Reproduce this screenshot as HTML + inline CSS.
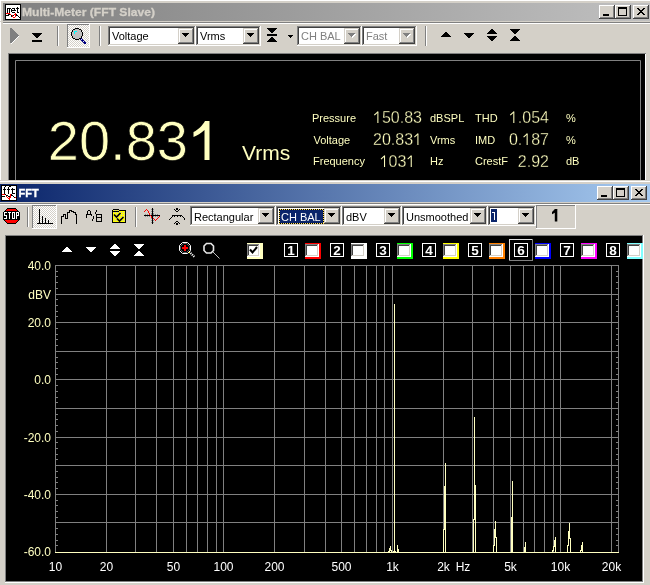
<!DOCTYPE html>
<html><head><meta charset="utf-8"><style>
html,body{margin:0;padding:0;background:#d4d0c8;overflow:hidden;}
svg{display:block;font-family:"Liberation Sans",sans-serif;will-change:transform;}
</style></head><body>
<svg width="650" height="585" viewBox="0 0 650 585">
<rect x="0" y="0" width="650" height="585" fill="#d4d0c8"/>
<rect x="0" y="0" width="650" height="1" fill="#ffffff"/>
<rect x="0" y="0" width="1" height="180" fill="#ffffff"/>
<defs><linearGradient id="g1" x1="0" x2="1" y1="0" y2="0"><stop offset="0" stop-color="#808080"/><stop offset="1" stop-color="#c0c0c0"/></linearGradient></defs>
<rect x="3" y="3" width="647" height="18" fill="url(#g1)"/>
<rect x="5" y="4" width="16" height="1" fill="#000"/>
<rect x="5" y="5" width="1" height="1" fill="#000"/>
<rect x="6" y="5" width="14" height="1" fill="#fff"/>
<rect x="20" y="5" width="1" height="1" fill="#000"/>
<rect x="5" y="6" width="1" height="1" fill="#000"/>
<rect x="6" y="6" width="14" height="1" fill="#fff"/>
<rect x="20" y="6" width="1" height="1" fill="#000"/>
<rect x="5" y="7" width="1" height="1" fill="#000"/>
<rect x="6" y="7" width="11" height="1" fill="#fff"/>
<rect x="17" y="7" width="1" height="1" fill="#000"/>
<rect x="18" y="7" width="2" height="1" fill="#fff"/>
<rect x="20" y="7" width="1" height="1" fill="#000"/>
<rect x="5" y="8" width="1" height="1" fill="#000"/>
<rect x="6" y="8" width="1" height="1" fill="#fff"/>
<rect x="7" y="8" width="4" height="1" fill="#000"/>
<rect x="11" y="8" width="1" height="1" fill="#fff"/>
<rect x="12" y="8" width="3" height="1" fill="#000"/>
<rect x="15" y="8" width="1" height="1" fill="#fff"/>
<rect x="16" y="8" width="3" height="1" fill="#000"/>
<rect x="19" y="8" width="1" height="1" fill="#fff"/>
<rect x="20" y="8" width="1" height="1" fill="#000"/>
<rect x="5" y="9" width="1" height="1" fill="#000"/>
<rect x="6" y="9" width="1" height="1" fill="#fff"/>
<rect x="7" y="9" width="1" height="1" fill="#000"/>
<rect x="8" y="9" width="1" height="1" fill="#fff"/>
<rect x="9" y="9" width="1" height="1" fill="#000"/>
<rect x="10" y="9" width="1" height="1" fill="#fff"/>
<rect x="11" y="9" width="1" height="1" fill="#000"/>
<rect x="12" y="9" width="2" height="1" fill="#fff"/>
<rect x="14" y="9" width="1" height="1" fill="#000"/>
<rect x="15" y="9" width="2" height="1" fill="#fff"/>
<rect x="17" y="9" width="1" height="1" fill="#000"/>
<rect x="18" y="9" width="2" height="1" fill="#fff"/>
<rect x="20" y="9" width="1" height="1" fill="#000"/>
<rect x="5" y="10" width="1" height="1" fill="#000"/>
<rect x="6" y="10" width="1" height="1" fill="#fff"/>
<rect x="7" y="10" width="1" height="1" fill="#000"/>
<rect x="8" y="10" width="1" height="1" fill="#fff"/>
<rect x="9" y="10" width="1" height="1" fill="#000"/>
<rect x="10" y="10" width="1" height="1" fill="#fff"/>
<rect x="11" y="10" width="5" height="1" fill="#000"/>
<rect x="16" y="10" width="1" height="1" fill="#fff"/>
<rect x="17" y="10" width="1" height="1" fill="#000"/>
<rect x="18" y="10" width="2" height="1" fill="#fff"/>
<rect x="20" y="10" width="1" height="1" fill="#000"/>
<rect x="5" y="11" width="1" height="1" fill="#000"/>
<rect x="6" y="11" width="1" height="1" fill="#fff"/>
<rect x="7" y="11" width="1" height="1" fill="#000"/>
<rect x="8" y="11" width="1" height="1" fill="#fff"/>
<rect x="9" y="11" width="1" height="1" fill="#000"/>
<rect x="10" y="11" width="1" height="1" fill="#fff"/>
<rect x="11" y="11" width="1" height="1" fill="#000"/>
<rect x="12" y="11" width="5" height="1" fill="#fff"/>
<rect x="17" y="11" width="1" height="1" fill="#000"/>
<rect x="18" y="11" width="2" height="1" fill="#fff"/>
<rect x="20" y="11" width="1" height="1" fill="#000"/>
<rect x="5" y="12" width="1" height="1" fill="#000"/>
<rect x="6" y="12" width="1" height="1" fill="#fff"/>
<rect x="7" y="12" width="1" height="1" fill="#000"/>
<rect x="8" y="12" width="1" height="1" fill="#fff"/>
<rect x="9" y="12" width="1" height="1" fill="#000"/>
<rect x="10" y="12" width="2" height="1" fill="#fff"/>
<rect x="12" y="12" width="3" height="1" fill="#000"/>
<rect x="15" y="12" width="2" height="1" fill="#fff"/>
<rect x="17" y="12" width="2" height="1" fill="#000"/>
<rect x="19" y="12" width="1" height="1" fill="#fff"/>
<rect x="20" y="12" width="1" height="1" fill="#000"/>
<rect x="5" y="13" width="1" height="1" fill="#000"/>
<rect x="6" y="13" width="4" height="1" fill="#f00"/>
<rect x="10" y="13" width="5" height="1" fill="#fff"/>
<rect x="15" y="13" width="1" height="1" fill="#f00"/>
<rect x="16" y="13" width="4" height="1" fill="#fff"/>
<rect x="20" y="13" width="1" height="1" fill="#000"/>
<rect x="5" y="14" width="1" height="1" fill="#000"/>
<rect x="6" y="14" width="2" height="1" fill="#fff"/>
<rect x="8" y="14" width="2" height="1" fill="#000"/>
<rect x="10" y="14" width="1" height="1" fill="#f00"/>
<rect x="11" y="14" width="3" height="1" fill="#fff"/>
<rect x="14" y="14" width="2" height="1" fill="#f00"/>
<rect x="16" y="14" width="1" height="1" fill="#000"/>
<rect x="17" y="14" width="3" height="1" fill="#fff"/>
<rect x="20" y="14" width="1" height="1" fill="#000"/>
<rect x="5" y="15" width="4" height="1" fill="#000"/>
<rect x="9" y="15" width="2" height="1" fill="#fff"/>
<rect x="11" y="15" width="1" height="1" fill="#000"/>
<rect x="12" y="15" width="1" height="1" fill="#f00"/>
<rect x="13" y="15" width="1" height="1" fill="#000"/>
<rect x="14" y="15" width="1" height="1" fill="#fff"/>
<rect x="15" y="15" width="1" height="1" fill="#f00"/>
<rect x="16" y="15" width="2" height="1" fill="#000"/>
<rect x="18" y="15" width="2" height="1" fill="#fff"/>
<rect x="20" y="15" width="1" height="1" fill="#000"/>
<rect x="5" y="16" width="1" height="1" fill="#000"/>
<rect x="6" y="16" width="5" height="1" fill="#fff"/>
<rect x="11" y="16" width="1" height="1" fill="#000"/>
<rect x="12" y="16" width="1" height="1" fill="#f00"/>
<rect x="13" y="16" width="2" height="1" fill="#fff"/>
<rect x="15" y="16" width="1" height="1" fill="#f00"/>
<rect x="16" y="16" width="2" height="1" fill="#fff"/>
<rect x="18" y="16" width="1" height="1" fill="#000"/>
<rect x="19" y="16" width="1" height="1" fill="#fff"/>
<rect x="20" y="16" width="1" height="1" fill="#000"/>
<rect x="5" y="17" width="1" height="1" fill="#000"/>
<rect x="6" y="17" width="7" height="1" fill="#fff"/>
<rect x="13" y="17" width="2" height="1" fill="#f00"/>
<rect x="15" y="17" width="4" height="1" fill="#fff"/>
<rect x="19" y="17" width="2" height="1" fill="#000"/>
<rect x="5" y="18" width="1" height="1" fill="#000"/>
<rect x="6" y="18" width="14" height="1" fill="#fff"/>
<rect x="20" y="18" width="1" height="1" fill="#000"/>
<rect x="5" y="19" width="16" height="1" fill="#000"/>
<text x="22" y="16" font-size="11" fill="#d4d0c8" font-weight="bold" text-anchor="start" font-family="Liberation Sans" textLength="133" lengthAdjust="spacingAndGlyphs" stroke="#d4d0c8" stroke-width="0.3">Multi-Meter (FFT Slave)</text>
<rect x="599" y="5" width="16" height="14" fill="#404040"/>
<rect x="599" y="5" width="15" height="13" fill="#ffffff"/>
<rect x="600" y="6" width="14" height="12" fill="#808080"/>
<rect x="600" y="6" width="13" height="11" fill="#d4d0c8"/>
<rect x="615" y="5" width="16" height="14" fill="#404040"/>
<rect x="615" y="5" width="15" height="13" fill="#ffffff"/>
<rect x="616" y="6" width="14" height="12" fill="#808080"/>
<rect x="616" y="6" width="13" height="11" fill="#d4d0c8"/>
<rect x="633" y="5" width="16" height="14" fill="#404040"/>
<rect x="633" y="5" width="15" height="13" fill="#ffffff"/>
<rect x="634" y="6" width="14" height="12" fill="#808080"/>
<rect x="634" y="6" width="13" height="11" fill="#d4d0c8"/>
<rect x="603" y="14" width="6" height="2" fill="#000"/>
<rect x="618" y="7" width="9" height="9" fill="#000"/>
<rect x="619" y="9" width="7" height="6" fill="#d4d0c8"/>
<rect x="637" y="8" width="2" height="1" fill="#000"/>
<rect x="643" y="8" width="2" height="1" fill="#000"/>
<rect x="638" y="9" width="2" height="1" fill="#000"/>
<rect x="642" y="9" width="2" height="1" fill="#000"/>
<rect x="639" y="10" width="4" height="1" fill="#000"/>
<rect x="640" y="11" width="2" height="1" fill="#000"/>
<rect x="639" y="12" width="4" height="1" fill="#000"/>
<rect x="638" y="13" width="2" height="1" fill="#000"/>
<rect x="642" y="13" width="2" height="1" fill="#000"/>
<rect x="637" y="14" width="2" height="1" fill="#000"/>
<rect x="643" y="14" width="2" height="1" fill="#000"/>
<rect x="3" y="22" width="647" height="1" fill="#808080"/>
<rect x="3" y="23" width="647" height="1" fill="#ffffff"/>
<rect x="0" y="21" width="650" height="1" fill="#d4d0c8"/>
<rect x="10" y="28" width="2" height="1" fill="#808080"/>
<rect x="10" y="29" width="3" height="1" fill="#808080"/>
<rect x="10" y="30" width="4" height="1" fill="#808080"/>
<rect x="10" y="31" width="5" height="1" fill="#808080"/>
<rect x="10" y="32" width="6" height="1" fill="#808080"/>
<rect x="10" y="33" width="7" height="1" fill="#808080"/>
<rect x="10" y="34" width="8" height="1" fill="#808080"/>
<rect x="10" y="35" width="9" height="1" fill="#808080"/>
<rect x="10" y="36" width="8" height="1" fill="#808080"/>
<rect x="18" y="36" width="1" height="1" fill="#fff"/>
<rect x="10" y="37" width="7" height="1" fill="#808080"/>
<rect x="17" y="37" width="1" height="1" fill="#fff"/>
<rect x="10" y="38" width="6" height="1" fill="#808080"/>
<rect x="16" y="38" width="1" height="1" fill="#fff"/>
<rect x="10" y="39" width="5" height="1" fill="#808080"/>
<rect x="15" y="39" width="1" height="1" fill="#fff"/>
<rect x="10" y="40" width="4" height="1" fill="#808080"/>
<rect x="14" y="40" width="1" height="1" fill="#fff"/>
<rect x="10" y="41" width="3" height="1" fill="#808080"/>
<rect x="13" y="41" width="1" height="1" fill="#fff"/>
<rect x="10" y="42" width="2" height="1" fill="#808080"/>
<rect x="12" y="42" width="1" height="1" fill="#fff"/>
<rect x="11" y="43" width="1" height="1" fill="#fff"/>
<rect x="32" y="33" width="10" height="1" fill="#000"/>
<rect x="33" y="34" width="8" height="1" fill="#000"/>
<rect x="34" y="35" width="6" height="1" fill="#000"/>
<rect x="35" y="36" width="4" height="1" fill="#000"/>
<rect x="36" y="37" width="2" height="1" fill="#000"/>
<rect x="32" y="40" width="10" height="2" fill="#000"/>
<rect x="57" y="26" width="1" height="20" fill="#808080"/>
<rect x="58" y="26" width="1" height="20" fill="#ffffff"/>
<rect x="67" y="24" width="23" height="24" fill="#ffffff"/>
<rect x="67" y="24" width="22" height="23" fill="#808080"/>
<rect x="68" y="25" width="21" height="22" fill="url(#dither)"/>
<defs><pattern id="dither" width="2" height="2" patternUnits="userSpaceOnUse"><rect width="2" height="2" fill="#ffffff"/><rect width="1" height="1" fill="#d4d0c8"/><rect x="1" y="1" width="1" height="1" fill="#d4d0c8"/></pattern></defs>
<rect x="75" y="28" width="4" height="1" fill="#000"/>
<rect x="73" y="29" width="2" height="1" fill="#000"/>
<rect x="75" y="29" width="4" height="1" fill="#c0c0c0"/>
<rect x="79" y="29" width="2" height="1" fill="#000"/>
<rect x="72" y="30" width="1" height="1" fill="#000"/>
<rect x="73" y="30" width="8" height="1" fill="#c0c0c0"/>
<rect x="81" y="30" width="1" height="1" fill="#000"/>
<rect x="72" y="31" width="1" height="1" fill="#000"/>
<rect x="73" y="31" width="1" height="1" fill="#c0c0c0"/>
<rect x="74" y="31" width="3" height="1" fill="#00ffff"/>
<rect x="77" y="31" width="4" height="1" fill="#c0c0c0"/>
<rect x="81" y="31" width="1" height="1" fill="#000"/>
<rect x="71" y="32" width="1" height="1" fill="#000"/>
<rect x="72" y="32" width="2" height="1" fill="#c0c0c0"/>
<rect x="74" y="32" width="1" height="1" fill="#00ffff"/>
<rect x="75" y="32" width="7" height="1" fill="#c0c0c0"/>
<rect x="82" y="32" width="1" height="1" fill="#000"/>
<rect x="71" y="33" width="1" height="1" fill="#000"/>
<rect x="72" y="33" width="2" height="1" fill="#c0c0c0"/>
<rect x="74" y="33" width="1" height="1" fill="#00ffff"/>
<rect x="75" y="33" width="7" height="1" fill="#c0c0c0"/>
<rect x="82" y="33" width="1" height="1" fill="#000"/>
<rect x="71" y="34" width="1" height="1" fill="#000"/>
<rect x="72" y="34" width="10" height="1" fill="#c0c0c0"/>
<rect x="82" y="34" width="1" height="1" fill="#000"/>
<rect x="71" y="35" width="1" height="1" fill="#000"/>
<rect x="72" y="35" width="10" height="1" fill="#c0c0c0"/>
<rect x="82" y="35" width="1" height="1" fill="#000"/>
<rect x="72" y="36" width="1" height="1" fill="#000"/>
<rect x="73" y="36" width="8" height="1" fill="#c0c0c0"/>
<rect x="81" y="36" width="1" height="1" fill="#000"/>
<rect x="72" y="37" width="1" height="1" fill="#000"/>
<rect x="73" y="37" width="8" height="1" fill="#c0c0c0"/>
<rect x="81" y="37" width="1" height="1" fill="#000"/>
<rect x="73" y="38" width="2" height="1" fill="#000"/>
<rect x="75" y="38" width="4" height="1" fill="#c0c0c0"/>
<rect x="79" y="38" width="2" height="1" fill="#000"/>
<rect x="81" y="38" width="1" height="1" fill="#000080"/>
<rect x="75" y="39" width="4" height="1" fill="#000"/>
<rect x="80" y="39" width="1" height="1" fill="#000080"/>
<rect x="81" y="39" width="1" height="1" fill="#e0e0ff"/>
<rect x="82" y="39" width="1" height="1" fill="#000080"/>
<rect x="81" y="40" width="3" height="1" fill="#000080"/>
<rect x="82" y="41" width="1" height="1" fill="#000080"/>
<rect x="83" y="41" width="1" height="1" fill="#e0e0ff"/>
<rect x="84" y="41" width="1" height="1" fill="#000080"/>
<rect x="83" y="42" width="3" height="1" fill="#000080"/>
<rect x="84" y="43" width="2" height="1" fill="#000080"/>
<rect x="99" y="26" width="1" height="20" fill="#808080"/>
<rect x="100" y="26" width="1" height="20" fill="#ffffff"/>
<rect x="108" y="26" width="88" height="20" fill="#ffffff"/>
<rect x="108" y="26" width="87" height="19" fill="#808080"/>
<rect x="109" y="27" width="86" height="18" fill="#d4d0c8"/>
<rect x="109" y="27" width="85" height="17" fill="#404040"/>
<rect x="110" y="28" width="84" height="16" fill="#ffffff"/>
<rect x="178" y="28" width="16" height="16" fill="#404040"/>
<rect x="178" y="28" width="15" height="15" fill="#d4d0c8"/>
<rect x="179" y="29" width="14" height="14" fill="#808080"/>
<rect x="179" y="29" width="13" height="13" fill="#ffffff"/>
<rect x="180" y="30" width="12" height="12" fill="#d4d0c8"/>
<rect x="182" y="33" width="7" height="1" fill="#000"/>
<rect x="183" y="34" width="5" height="1" fill="#000"/>
<rect x="184" y="35" width="3" height="1" fill="#000"/>
<rect x="185" y="36" width="1" height="1" fill="#000"/>
<text x="112" y="40" font-size="11" fill="#000" font-weight="normal" text-anchor="start" font-family="Liberation Sans">Voltage</text>
<rect x="196" y="26" width="65" height="20" fill="#ffffff"/>
<rect x="196" y="26" width="64" height="19" fill="#808080"/>
<rect x="197" y="27" width="63" height="18" fill="#d4d0c8"/>
<rect x="197" y="27" width="62" height="17" fill="#404040"/>
<rect x="198" y="28" width="61" height="16" fill="#ffffff"/>
<rect x="243" y="28" width="16" height="16" fill="#404040"/>
<rect x="243" y="28" width="15" height="15" fill="#d4d0c8"/>
<rect x="244" y="29" width="14" height="14" fill="#808080"/>
<rect x="244" y="29" width="13" height="13" fill="#ffffff"/>
<rect x="245" y="30" width="12" height="12" fill="#d4d0c8"/>
<rect x="247" y="33" width="7" height="1" fill="#000"/>
<rect x="248" y="34" width="5" height="1" fill="#000"/>
<rect x="249" y="35" width="3" height="1" fill="#000"/>
<rect x="250" y="36" width="1" height="1" fill="#000"/>
<text x="200" y="40" font-size="11" fill="#000" font-weight="normal" text-anchor="start" font-family="Liberation Sans">Vrms</text>
<rect x="267" y="28" width="10" height="1" fill="#000"/>
<rect x="268" y="29" width="8" height="1" fill="#000"/>
<rect x="269" y="30" width="6" height="1" fill="#000"/>
<rect x="270" y="31" width="4" height="1" fill="#000"/>
<rect x="271" y="32" width="2" height="1" fill="#000"/>
<rect x="267" y="34" width="10" height="2" fill="#000"/>
<rect x="271" y="37" width="2" height="1" fill="#000"/>
<rect x="270" y="38" width="4" height="1" fill="#000"/>
<rect x="269" y="39" width="6" height="1" fill="#000"/>
<rect x="268" y="40" width="8" height="1" fill="#000"/>
<rect x="267" y="41" width="10" height="1" fill="#000"/>
<rect x="288" y="35" width="5" height="1" fill="#000"/>
<rect x="289" y="36" width="3" height="1" fill="#000"/>
<rect x="290" y="37" width="1" height="1" fill="#000"/>
<rect x="297" y="26" width="65" height="20" fill="#ffffff"/>
<rect x="297" y="26" width="64" height="19" fill="#808080"/>
<rect x="298" y="27" width="63" height="18" fill="#d4d0c8"/>
<rect x="298" y="27" width="62" height="17" fill="#404040"/>
<rect x="299" y="28" width="61" height="16" fill="#ffffff"/>
<rect x="344" y="28" width="16" height="16" fill="#404040"/>
<rect x="344" y="28" width="15" height="15" fill="#d4d0c8"/>
<rect x="345" y="29" width="14" height="14" fill="#808080"/>
<rect x="345" y="29" width="13" height="13" fill="#ffffff"/>
<rect x="346" y="30" width="12" height="12" fill="#d4d0c8"/>
<rect x="349" y="34" width="7" height="1" fill="#ffffff"/>
<rect x="350" y="35" width="5" height="1" fill="#ffffff"/>
<rect x="351" y="36" width="3" height="1" fill="#ffffff"/>
<rect x="352" y="37" width="1" height="1" fill="#ffffff"/>
<rect x="348" y="33" width="7" height="1" fill="#808080"/>
<rect x="349" y="34" width="5" height="1" fill="#808080"/>
<rect x="350" y="35" width="3" height="1" fill="#808080"/>
<rect x="351" y="36" width="1" height="1" fill="#808080"/>
<text x="301" y="40" font-size="11" fill="#808080" font-weight="normal" text-anchor="start" font-family="Liberation Sans">CH BAL</text>
<rect x="362" y="26" width="55" height="20" fill="#ffffff"/>
<rect x="362" y="26" width="54" height="19" fill="#808080"/>
<rect x="363" y="27" width="53" height="18" fill="#d4d0c8"/>
<rect x="363" y="27" width="52" height="17" fill="#404040"/>
<rect x="364" y="28" width="51" height="16" fill="#ffffff"/>
<rect x="399" y="28" width="16" height="16" fill="#404040"/>
<rect x="399" y="28" width="15" height="15" fill="#d4d0c8"/>
<rect x="400" y="29" width="14" height="14" fill="#808080"/>
<rect x="400" y="29" width="13" height="13" fill="#ffffff"/>
<rect x="401" y="30" width="12" height="12" fill="#d4d0c8"/>
<rect x="404" y="34" width="7" height="1" fill="#ffffff"/>
<rect x="405" y="35" width="5" height="1" fill="#ffffff"/>
<rect x="406" y="36" width="3" height="1" fill="#ffffff"/>
<rect x="407" y="37" width="1" height="1" fill="#ffffff"/>
<rect x="403" y="33" width="7" height="1" fill="#808080"/>
<rect x="404" y="34" width="5" height="1" fill="#808080"/>
<rect x="405" y="35" width="3" height="1" fill="#808080"/>
<rect x="406" y="36" width="1" height="1" fill="#808080"/>
<text x="366" y="40" font-size="11" fill="#808080" font-weight="normal" text-anchor="start" font-family="Liberation Sans">Fast</text>
<rect x="425" y="26" width="1" height="20" fill="#808080"/>
<rect x="426" y="26" width="1" height="20" fill="#ffffff"/>
<rect x="445" y="32" width="2" height="1" fill="#000"/>
<rect x="444" y="33" width="4" height="1" fill="#000"/>
<rect x="443" y="34" width="6" height="1" fill="#000"/>
<rect x="442" y="35" width="8" height="1" fill="#000"/>
<rect x="441" y="36" width="10" height="1" fill="#000"/>
<rect x="464" y="33" width="10" height="1" fill="#000"/>
<rect x="465" y="34" width="8" height="1" fill="#000"/>
<rect x="466" y="35" width="6" height="1" fill="#000"/>
<rect x="467" y="36" width="4" height="1" fill="#000"/>
<rect x="468" y="37" width="2" height="1" fill="#000"/>
<rect x="491" y="29" width="2" height="1" fill="#000"/>
<rect x="490" y="30" width="4" height="1" fill="#000"/>
<rect x="489" y="31" width="6" height="1" fill="#000"/>
<rect x="488" y="32" width="8" height="1" fill="#000"/>
<rect x="487" y="33" width="10" height="1" fill="#000"/>
<rect x="487" y="36" width="10" height="1" fill="#000"/>
<rect x="488" y="37" width="8" height="1" fill="#000"/>
<rect x="489" y="38" width="6" height="1" fill="#000"/>
<rect x="490" y="39" width="4" height="1" fill="#000"/>
<rect x="491" y="40" width="2" height="1" fill="#000"/>
<rect x="510" y="29" width="10" height="1" fill="#000"/>
<rect x="511" y="30" width="8" height="1" fill="#000"/>
<rect x="512" y="31" width="6" height="1" fill="#000"/>
<rect x="513" y="32" width="4" height="1" fill="#000"/>
<rect x="514" y="33" width="2" height="1" fill="#000"/>
<rect x="514" y="36" width="2" height="1" fill="#000"/>
<rect x="513" y="37" width="4" height="1" fill="#000"/>
<rect x="512" y="38" width="6" height="1" fill="#000"/>
<rect x="511" y="39" width="8" height="1" fill="#000"/>
<rect x="510" y="40" width="10" height="1" fill="#000"/>
<rect x="8" y="53" width="638" height="128" fill="#808080"/>
<rect x="9" y="54" width="637" height="127" fill="#ffffff"/>
<rect x="9" y="54" width="636" height="126" fill="#000"/>
<path d="M15.5 200 L15.5 60.5 L640.5 60.5 L640.5 200" stroke="#808080" stroke-width="1" fill="none"/>
<text x="47.8" y="160.2" font-size="56" fill="#ffffc0" font-weight="normal" text-anchor="start" font-family="Liberation Sans" stroke="#000" stroke-width="0.7">20.83</text>
<path d="M205 121 L209.5 121 L209.5 160 L204.5 160 L204.5 130 C201 133.5 197 135.5 193.5 137 L193.5 132 C198 130 202.5 125.5 205 121 Z" fill="#ffffc0"/>
<text x="242" y="160" font-size="21" fill="#ffffc0" font-weight="normal" text-anchor="start" font-family="Liberation Sans">Vrms</text>
<text x="312" y="122" font-size="11" fill="#ffffc0" font-weight="normal" text-anchor="start" font-family="Liberation Sans">Pressure</text>
<text x="373.03517" y="123" font-size="16" fill="#ffffc0" font-weight="normal" text-anchor="start" font-family="Liberation Sans" stroke="#000" stroke-width="0.3">&#x2007;50.83</text>
<path d="M377.36 111.54 H378.41 V123 H377.36 Z M377.96 111.54 L374.24 115.38" fill="#ffffc0" stroke="#ffffc0" stroke-width="0.0"/>
<path d="M377.86 111.84 L374.32 115.06" stroke="#ffffc0" stroke-width="1.1" fill="none"/>
<text x="430" y="122" font-size="11" fill="#ffffc0" font-weight="normal" text-anchor="start" font-family="Liberation Sans">dBSPL</text>
<text x="475" y="122" font-size="11" fill="#ffffc0" font-weight="normal" text-anchor="start" font-family="Liberation Sans">THD</text>
<text x="508.968772" y="123" font-size="16" fill="#ffffc0" font-weight="normal" text-anchor="start" font-family="Liberation Sans" stroke="#000" stroke-width="0.3">&#x2007;.054</text>
<path d="M513.29 111.54 H514.34 V123 H513.29 Z M513.89 111.54 L510.17 115.38" fill="#ffffc0" stroke="#ffffc0" stroke-width="0.0"/>
<path d="M513.79 111.84 L510.25 115.06" stroke="#ffffc0" stroke-width="1.1" fill="none"/>
<text x="566" y="122" font-size="11" fill="#ffffc0" font-weight="normal" text-anchor="start" font-family="Liberation Sans">%</text>
<text x="313.5" y="144" font-size="11" fill="#ffffc0" font-weight="normal" text-anchor="start" font-family="Liberation Sans">Voltage</text>
<text x="373.03517" y="145" font-size="16" fill="#ffffc0" font-weight="normal" text-anchor="start" font-family="Liberation Sans" stroke="#000" stroke-width="0.3">20.83&#x2007;</text>
<path d="M417.39 133.54 H418.44 V145 H417.39 Z M417.99 133.54 L414.27 137.38" fill="#ffffc0" stroke="#ffffc0" stroke-width="0.0"/>
<path d="M417.89 133.84 L414.35 137.06" stroke="#ffffc0" stroke-width="1.1" fill="none"/>
<text x="430" y="144" font-size="11" fill="#ffffc0" font-weight="normal" text-anchor="start" font-family="Liberation Sans">Vrms</text>
<text x="475" y="144" font-size="11" fill="#ffffc0" font-weight="normal" text-anchor="start" font-family="Liberation Sans">IMD</text>
<text x="508.968772" y="145" font-size="16" fill="#ffffc0" font-weight="normal" text-anchor="start" font-family="Liberation Sans" stroke="#000" stroke-width="0.3">0.&#x2007;87</text>
<path d="M526.62 133.54 H527.67 V145 H526.62 Z M527.22 133.54 L523.50 137.38" fill="#ffffc0" stroke="#ffffc0" stroke-width="0.0"/>
<path d="M527.12 133.84 L523.58 137.06" stroke="#ffffc0" stroke-width="1.1" fill="none"/>
<text x="566" y="144" font-size="11" fill="#ffffc0" font-weight="normal" text-anchor="start" font-family="Liberation Sans">%</text>
<text x="313" y="165" font-size="11" fill="#ffffc0" font-weight="normal" text-anchor="start" font-family="Liberation Sans">Frequency</text>
<text x="379.703136" y="167" font-size="16" fill="#ffffc0" font-weight="normal" text-anchor="start" font-family="Liberation Sans" stroke="#000" stroke-width="0.3">&#x2007;03&#x2007;</text>
<path d="M384.02 155.54 H385.07 V167 H384.02 Z M384.62 155.54 L380.90 159.38" fill="#ffffc0" stroke="#ffffc0" stroke-width="0.0"/>
<path d="M384.52 155.84 L380.98 159.06" stroke="#ffffc0" stroke-width="1.1" fill="none"/>
<path d="M410.72 155.54 H411.77 V167 H410.72 Z M411.32 155.54 L407.60 159.38" fill="#ffffc0" stroke="#ffffc0" stroke-width="0.0"/>
<path d="M411.22 155.84 L407.68 159.06" stroke="#ffffc0" stroke-width="1.1" fill="none"/>
<text x="430" y="165" font-size="11" fill="#ffffc0" font-weight="normal" text-anchor="start" font-family="Liberation Sans">Hz</text>
<text x="475" y="165" font-size="11" fill="#ffffc0" font-weight="normal" text-anchor="start" font-family="Liberation Sans">CrestF</text>
<text x="517.867204" y="167" font-size="16" fill="#ffffc0" font-weight="normal" text-anchor="start" font-family="Liberation Sans" stroke="#000" stroke-width="0.3">2.92</text>
<text x="566" y="165" font-size="11" fill="#ffffc0" font-weight="normal" text-anchor="start" font-family="Liberation Sans">dB</text>
<rect x="0" y="180" width="650" height="1" fill="#d4d0c8"/>
<rect x="0" y="181" width="650" height="1" fill="#ffffff"/>
<rect x="0" y="182" width="650" height="2" fill="#d4d0c8"/>
<defs><linearGradient id="g2" x1="0" x2="1" y1="0" y2="0"><stop offset="0" stop-color="#0a246a"/><stop offset="1" stop-color="#a6caf0"/></linearGradient></defs>
<rect x="0" y="184" width="650" height="18" fill="url(#g2)"/>
<rect x="1" y="185" width="16" height="1" fill="#000"/>
<rect x="1" y="186" width="1" height="1" fill="#000"/>
<rect x="2" y="186" width="3" height="1" fill="#fff"/>
<rect x="5" y="186" width="1" height="1" fill="#000"/>
<rect x="6" y="186" width="3" height="1" fill="#fff"/>
<rect x="9" y="186" width="2" height="1" fill="#000"/>
<rect x="11" y="186" width="5" height="1" fill="#fff"/>
<rect x="16" y="186" width="1" height="1" fill="#000"/>
<rect x="1" y="187" width="1" height="1" fill="#000"/>
<rect x="2" y="187" width="2" height="1" fill="#fff"/>
<rect x="4" y="187" width="1" height="1" fill="#000"/>
<rect x="5" y="187" width="3" height="1" fill="#fff"/>
<rect x="8" y="187" width="1" height="1" fill="#000"/>
<rect x="9" y="187" width="7" height="1" fill="#fff"/>
<rect x="16" y="187" width="1" height="1" fill="#000"/>
<rect x="1" y="188" width="1" height="1" fill="#000"/>
<rect x="2" y="188" width="2" height="1" fill="#fff"/>
<rect x="4" y="188" width="1" height="1" fill="#000"/>
<rect x="5" y="188" width="3" height="1" fill="#fff"/>
<rect x="8" y="188" width="1" height="1" fill="#000"/>
<rect x="9" y="188" width="3" height="1" fill="#fff"/>
<rect x="12" y="188" width="1" height="1" fill="#000"/>
<rect x="13" y="188" width="3" height="1" fill="#fff"/>
<rect x="16" y="188" width="1" height="1" fill="#000"/>
<rect x="1" y="189" width="1" height="1" fill="#000"/>
<rect x="2" y="189" width="1" height="1" fill="#fff"/>
<rect x="3" y="189" width="3" height="1" fill="#000"/>
<rect x="6" y="189" width="1" height="1" fill="#fff"/>
<rect x="7" y="189" width="3" height="1" fill="#000"/>
<rect x="10" y="189" width="1" height="1" fill="#fff"/>
<rect x="11" y="189" width="4" height="1" fill="#000"/>
<rect x="15" y="189" width="1" height="1" fill="#fff"/>
<rect x="16" y="189" width="1" height="1" fill="#000"/>
<rect x="1" y="190" width="1" height="1" fill="#000"/>
<rect x="2" y="190" width="2" height="1" fill="#fff"/>
<rect x="4" y="190" width="1" height="1" fill="#000"/>
<rect x="5" y="190" width="3" height="1" fill="#fff"/>
<rect x="8" y="190" width="1" height="1" fill="#000"/>
<rect x="9" y="190" width="3" height="1" fill="#fff"/>
<rect x="12" y="190" width="1" height="1" fill="#000"/>
<rect x="13" y="190" width="3" height="1" fill="#fff"/>
<rect x="16" y="190" width="1" height="1" fill="#000"/>
<rect x="1" y="191" width="1" height="1" fill="#000"/>
<rect x="2" y="191" width="2" height="1" fill="#fff"/>
<rect x="4" y="191" width="1" height="1" fill="#000"/>
<rect x="5" y="191" width="3" height="1" fill="#fff"/>
<rect x="8" y="191" width="1" height="1" fill="#000"/>
<rect x="9" y="191" width="3" height="1" fill="#fff"/>
<rect x="12" y="191" width="1" height="1" fill="#000"/>
<rect x="13" y="191" width="3" height="1" fill="#fff"/>
<rect x="16" y="191" width="1" height="1" fill="#000"/>
<rect x="1" y="192" width="1" height="1" fill="#000"/>
<rect x="2" y="192" width="2" height="1" fill="#fff"/>
<rect x="4" y="192" width="1" height="1" fill="#000"/>
<rect x="5" y="192" width="3" height="1" fill="#fff"/>
<rect x="8" y="192" width="1" height="1" fill="#000"/>
<rect x="9" y="192" width="3" height="1" fill="#fff"/>
<rect x="12" y="192" width="1" height="1" fill="#000"/>
<rect x="13" y="192" width="3" height="1" fill="#fff"/>
<rect x="16" y="192" width="1" height="1" fill="#000"/>
<rect x="1" y="193" width="1" height="1" fill="#000"/>
<rect x="2" y="193" width="2" height="1" fill="#fff"/>
<rect x="4" y="193" width="1" height="1" fill="#000"/>
<rect x="5" y="193" width="3" height="1" fill="#fff"/>
<rect x="8" y="193" width="1" height="1" fill="#000"/>
<rect x="9" y="193" width="3" height="1" fill="#fff"/>
<rect x="12" y="193" width="3" height="1" fill="#000"/>
<rect x="15" y="193" width="1" height="1" fill="#fff"/>
<rect x="16" y="193" width="1" height="1" fill="#000"/>
<rect x="1" y="194" width="1" height="1" fill="#000"/>
<rect x="2" y="194" width="3" height="1" fill="#f00"/>
<rect x="5" y="194" width="1" height="1" fill="#000"/>
<rect x="6" y="194" width="4" height="1" fill="#fff"/>
<rect x="10" y="194" width="1" height="1" fill="#f00"/>
<rect x="11" y="194" width="1" height="1" fill="#000"/>
<rect x="12" y="194" width="4" height="1" fill="#fff"/>
<rect x="16" y="194" width="1" height="1" fill="#000"/>
<rect x="1" y="195" width="1" height="1" fill="#000"/>
<rect x="2" y="195" width="4" height="1" fill="#fff"/>
<rect x="6" y="195" width="2" height="1" fill="#000"/>
<rect x="8" y="195" width="2" height="1" fill="#fff"/>
<rect x="10" y="195" width="1" height="1" fill="#f00"/>
<rect x="11" y="195" width="2" height="1" fill="#000"/>
<rect x="13" y="195" width="3" height="1" fill="#fff"/>
<rect x="16" y="195" width="1" height="1" fill="#000"/>
<rect x="1" y="196" width="4" height="1" fill="#000"/>
<rect x="5" y="196" width="1" height="1" fill="#fff"/>
<rect x="6" y="196" width="1" height="1" fill="#f00"/>
<rect x="7" y="196" width="1" height="1" fill="#fff"/>
<rect x="8" y="196" width="2" height="1" fill="#000"/>
<rect x="10" y="196" width="1" height="1" fill="#f00"/>
<rect x="11" y="196" width="2" height="1" fill="#fff"/>
<rect x="13" y="196" width="1" height="1" fill="#000"/>
<rect x="14" y="196" width="2" height="1" fill="#fff"/>
<rect x="16" y="196" width="1" height="1" fill="#000"/>
<rect x="1" y="197" width="1" height="1" fill="#000"/>
<rect x="2" y="197" width="5" height="1" fill="#fff"/>
<rect x="7" y="197" width="1" height="1" fill="#f00"/>
<rect x="8" y="197" width="1" height="1" fill="#fff"/>
<rect x="9" y="197" width="2" height="1" fill="#f00"/>
<rect x="11" y="197" width="3" height="1" fill="#fff"/>
<rect x="14" y="197" width="1" height="1" fill="#000"/>
<rect x="15" y="197" width="1" height="1" fill="#f00"/>
<rect x="16" y="197" width="1" height="1" fill="#000"/>
<rect x="1" y="198" width="1" height="1" fill="#000"/>
<rect x="2" y="198" width="6" height="1" fill="#fff"/>
<rect x="8" y="198" width="2" height="1" fill="#f00"/>
<rect x="10" y="198" width="6" height="1" fill="#fff"/>
<rect x="16" y="198" width="1" height="1" fill="#000"/>
<rect x="1" y="199" width="1" height="1" fill="#000"/>
<rect x="2" y="199" width="7" height="1" fill="#fff"/>
<rect x="9" y="199" width="1" height="1" fill="#f00"/>
<rect x="10" y="199" width="6" height="1" fill="#fff"/>
<rect x="16" y="199" width="1" height="1" fill="#000"/>
<rect x="1" y="200" width="16" height="1" fill="#000"/>
<text x="18.5" y="197" font-size="11" fill="#ffffff" font-weight="bold" text-anchor="start" font-family="Liberation Sans" stroke="#fff" stroke-width="0.35">FFT</text>
<rect x="597" y="186" width="16" height="14" fill="#404040"/>
<rect x="597" y="186" width="15" height="13" fill="#ffffff"/>
<rect x="598" y="187" width="14" height="12" fill="#808080"/>
<rect x="598" y="187" width="13" height="11" fill="#d4d0c8"/>
<rect x="613" y="186" width="16" height="14" fill="#404040"/>
<rect x="613" y="186" width="15" height="13" fill="#ffffff"/>
<rect x="614" y="187" width="14" height="12" fill="#808080"/>
<rect x="614" y="187" width="13" height="11" fill="#d4d0c8"/>
<rect x="631" y="186" width="16" height="14" fill="#404040"/>
<rect x="631" y="186" width="15" height="13" fill="#ffffff"/>
<rect x="632" y="187" width="14" height="12" fill="#808080"/>
<rect x="632" y="187" width="13" height="11" fill="#d4d0c8"/>
<rect x="601" y="195" width="6" height="2" fill="#000"/>
<rect x="616" y="188" width="9" height="9" fill="#000"/>
<rect x="617" y="190" width="7" height="6" fill="#d4d0c8"/>
<rect x="635" y="189" width="2" height="1" fill="#000"/>
<rect x="641" y="189" width="2" height="1" fill="#000"/>
<rect x="636" y="190" width="2" height="1" fill="#000"/>
<rect x="640" y="190" width="2" height="1" fill="#000"/>
<rect x="637" y="191" width="4" height="1" fill="#000"/>
<rect x="638" y="192" width="2" height="1" fill="#000"/>
<rect x="637" y="193" width="4" height="1" fill="#000"/>
<rect x="636" y="194" width="2" height="1" fill="#000"/>
<rect x="640" y="194" width="2" height="1" fill="#000"/>
<rect x="635" y="195" width="2" height="1" fill="#000"/>
<rect x="641" y="195" width="2" height="1" fill="#000"/>
<rect x="0" y="203" width="650" height="1" fill="#808080"/>
<rect x="0" y="204" width="650" height="1" fill="#ffffff"/>
<rect x="7" y="208" width="9" height="1" fill="#000"/>
<rect x="6" y="209" width="1" height="1" fill="#000"/>
<rect x="7" y="209" width="9" height="1" fill="#f00"/>
<rect x="16" y="209" width="1" height="1" fill="#000"/>
<rect x="5" y="210" width="1" height="1" fill="#000"/>
<rect x="6" y="210" width="11" height="1" fill="#f00"/>
<rect x="17" y="210" width="1" height="1" fill="#000"/>
<rect x="4" y="211" width="15" height="1" fill="#000"/>
<rect x="3" y="212" width="1" height="1" fill="#000"/>
<rect x="4" y="212" width="3" height="1" fill="#fff"/>
<rect x="7" y="212" width="1" height="1" fill="#000"/>
<rect x="8" y="212" width="3" height="1" fill="#fff"/>
<rect x="11" y="212" width="1" height="1" fill="#000"/>
<rect x="12" y="212" width="3" height="1" fill="#fff"/>
<rect x="15" y="212" width="1" height="1" fill="#000"/>
<rect x="16" y="212" width="3" height="1" fill="#fff"/>
<rect x="19" y="212" width="1" height="1" fill="#000"/>
<rect x="3" y="213" width="1" height="1" fill="#000"/>
<rect x="4" y="213" width="1" height="1" fill="#fff"/>
<rect x="5" y="213" width="4" height="1" fill="#000"/>
<rect x="9" y="213" width="1" height="1" fill="#fff"/>
<rect x="10" y="213" width="2" height="1" fill="#000"/>
<rect x="12" y="213" width="1" height="1" fill="#fff"/>
<rect x="13" y="213" width="1" height="1" fill="#000"/>
<rect x="14" y="213" width="1" height="1" fill="#fff"/>
<rect x="15" y="213" width="1" height="1" fill="#000"/>
<rect x="16" y="213" width="1" height="1" fill="#fff"/>
<rect x="17" y="213" width="1" height="1" fill="#000"/>
<rect x="18" y="213" width="1" height="1" fill="#fff"/>
<rect x="19" y="213" width="1" height="1" fill="#000"/>
<rect x="3" y="214" width="1" height="1" fill="#000"/>
<rect x="4" y="214" width="1" height="1" fill="#fff"/>
<rect x="5" y="214" width="4" height="1" fill="#000"/>
<rect x="9" y="214" width="1" height="1" fill="#fff"/>
<rect x="10" y="214" width="2" height="1" fill="#000"/>
<rect x="12" y="214" width="1" height="1" fill="#fff"/>
<rect x="13" y="214" width="1" height="1" fill="#000"/>
<rect x="14" y="214" width="1" height="1" fill="#fff"/>
<rect x="15" y="214" width="1" height="1" fill="#000"/>
<rect x="16" y="214" width="1" height="1" fill="#fff"/>
<rect x="17" y="214" width="1" height="1" fill="#000"/>
<rect x="18" y="214" width="1" height="1" fill="#fff"/>
<rect x="19" y="214" width="1" height="1" fill="#000"/>
<rect x="3" y="215" width="1" height="1" fill="#000"/>
<rect x="4" y="215" width="3" height="1" fill="#fff"/>
<rect x="7" y="215" width="2" height="1" fill="#000"/>
<rect x="9" y="215" width="1" height="1" fill="#fff"/>
<rect x="10" y="215" width="2" height="1" fill="#000"/>
<rect x="12" y="215" width="1" height="1" fill="#fff"/>
<rect x="13" y="215" width="1" height="1" fill="#000"/>
<rect x="14" y="215" width="1" height="1" fill="#fff"/>
<rect x="15" y="215" width="1" height="1" fill="#000"/>
<rect x="16" y="215" width="3" height="1" fill="#fff"/>
<rect x="19" y="215" width="1" height="1" fill="#000"/>
<rect x="3" y="216" width="3" height="1" fill="#000"/>
<rect x="6" y="216" width="1" height="1" fill="#fff"/>
<rect x="7" y="216" width="2" height="1" fill="#000"/>
<rect x="9" y="216" width="1" height="1" fill="#fff"/>
<rect x="10" y="216" width="2" height="1" fill="#000"/>
<rect x="12" y="216" width="1" height="1" fill="#fff"/>
<rect x="13" y="216" width="1" height="1" fill="#000"/>
<rect x="14" y="216" width="1" height="1" fill="#fff"/>
<rect x="15" y="216" width="1" height="1" fill="#000"/>
<rect x="16" y="216" width="1" height="1" fill="#fff"/>
<rect x="17" y="216" width="3" height="1" fill="#000"/>
<rect x="3" y="217" width="3" height="1" fill="#000"/>
<rect x="6" y="217" width="1" height="1" fill="#fff"/>
<rect x="7" y="217" width="2" height="1" fill="#000"/>
<rect x="9" y="217" width="1" height="1" fill="#fff"/>
<rect x="10" y="217" width="2" height="1" fill="#000"/>
<rect x="12" y="217" width="1" height="1" fill="#fff"/>
<rect x="13" y="217" width="1" height="1" fill="#000"/>
<rect x="14" y="217" width="1" height="1" fill="#fff"/>
<rect x="15" y="217" width="1" height="1" fill="#000"/>
<rect x="16" y="217" width="1" height="1" fill="#fff"/>
<rect x="17" y="217" width="3" height="1" fill="#000"/>
<rect x="3" y="218" width="1" height="1" fill="#000"/>
<rect x="4" y="218" width="3" height="1" fill="#fff"/>
<rect x="7" y="218" width="2" height="1" fill="#000"/>
<rect x="9" y="218" width="1" height="1" fill="#fff"/>
<rect x="10" y="218" width="2" height="1" fill="#000"/>
<rect x="12" y="218" width="3" height="1" fill="#fff"/>
<rect x="15" y="218" width="1" height="1" fill="#000"/>
<rect x="16" y="218" width="1" height="1" fill="#fff"/>
<rect x="17" y="218" width="3" height="1" fill="#000"/>
<rect x="3" y="219" width="17" height="1" fill="#000"/>
<rect x="4" y="220" width="1" height="1" fill="#000"/>
<rect x="5" y="220" width="13" height="1" fill="#f00"/>
<rect x="18" y="220" width="1" height="1" fill="#000"/>
<rect x="5" y="221" width="1" height="1" fill="#000"/>
<rect x="6" y="221" width="11" height="1" fill="#f00"/>
<rect x="17" y="221" width="1" height="1" fill="#000"/>
<rect x="6" y="222" width="1" height="1" fill="#000"/>
<rect x="7" y="222" width="9" height="1" fill="#f00"/>
<rect x="16" y="222" width="1" height="1" fill="#000"/>
<rect x="7" y="223" width="9" height="1" fill="#000"/>
<rect x="27" y="207" width="1" height="20" fill="#808080"/>
<rect x="28" y="207" width="1" height="20" fill="#ffffff"/>
<rect x="32" y="205" width="25" height="24" fill="#ffffff"/>
<rect x="32" y="205" width="24" height="23" fill="#808080"/>
<rect x="33" y="206" width="23" height="22" fill="url(#dither)"/>
<rect x="37" y="223" width="16" height="1" fill="#000"/>
<rect x="39" y="209" width="1" height="14" fill="#000"/>
<rect x="42" y="216" width="1" height="7" fill="#000"/>
<rect x="45" y="218" width="1" height="5" fill="#000"/>
<rect x="48" y="220" width="1" height="3" fill="#000"/>
<rect x="69" y="210" width="3" height="1" fill="#000"/>
<rect x="69" y="211" width="1" height="1" fill="#000"/>
<rect x="71" y="211" width="3" height="1" fill="#000"/>
<rect x="67" y="212" width="3" height="1" fill="#000"/>
<rect x="73" y="212" width="3" height="1" fill="#000"/>
<rect x="67" y="213" width="1" height="1" fill="#000"/>
<rect x="75" y="213" width="1" height="1" fill="#000"/>
<rect x="63" y="214" width="3" height="1" fill="#000"/>
<rect x="67" y="214" width="1" height="1" fill="#000"/>
<rect x="75" y="214" width="2" height="1" fill="#000"/>
<rect x="63" y="215" width="1" height="1" fill="#000"/>
<rect x="65" y="215" width="1" height="1" fill="#000"/>
<rect x="67" y="215" width="1" height="1" fill="#000"/>
<rect x="76" y="215" width="1" height="1" fill="#000"/>
<rect x="61" y="216" width="3" height="1" fill="#000"/>
<rect x="65" y="216" width="1" height="1" fill="#000"/>
<rect x="67" y="216" width="1" height="1" fill="#000"/>
<rect x="76" y="216" width="1" height="1" fill="#000"/>
<rect x="61" y="217" width="1" height="1" fill="#000"/>
<rect x="65" y="217" width="1" height="1" fill="#000"/>
<rect x="67" y="217" width="1" height="1" fill="#000"/>
<rect x="76" y="217" width="1" height="1" fill="#000"/>
<rect x="61" y="218" width="1" height="1" fill="#000"/>
<rect x="65" y="218" width="3" height="1" fill="#000"/>
<rect x="76" y="218" width="1" height="1" fill="#000"/>
<rect x="61" y="219" width="1" height="1" fill="#000"/>
<rect x="76" y="219" width="1" height="1" fill="#000"/>
<rect x="61" y="220" width="1" height="1" fill="#000"/>
<rect x="76" y="220" width="1" height="1" fill="#000"/>
<rect x="61" y="221" width="1" height="1" fill="#000"/>
<rect x="76" y="221" width="1" height="1" fill="#000"/>
<rect x="61" y="222" width="1" height="1" fill="#000"/>
<rect x="76" y="222" width="1" height="1" fill="#000"/>
<rect x="61" y="223" width="1" height="1" fill="#000"/>
<rect x="76" y="223" width="1" height="1" fill="#000"/>
<rect x="88" y="210" width="2" height="1" fill="#000"/>
<rect x="96" y="210" width="1" height="1" fill="#000"/>
<rect x="87" y="211" width="1" height="1" fill="#000"/>
<rect x="90" y="211" width="1" height="1" fill="#000"/>
<rect x="96" y="211" width="1" height="1" fill="#000"/>
<rect x="87" y="212" width="1" height="1" fill="#000"/>
<rect x="90" y="212" width="1" height="1" fill="#000"/>
<rect x="95" y="212" width="1" height="1" fill="#000"/>
<rect x="87" y="213" width="1" height="1" fill="#000"/>
<rect x="90" y="213" width="1" height="1" fill="#000"/>
<rect x="95" y="213" width="1" height="1" fill="#000"/>
<rect x="86" y="214" width="6" height="1" fill="#000"/>
<rect x="96" y="214" width="6" height="1" fill="#000"/>
<rect x="86" y="215" width="1" height="1" fill="#000"/>
<rect x="91" y="215" width="1" height="1" fill="#000"/>
<rect x="96" y="215" width="1" height="1" fill="#000"/>
<rect x="101" y="215" width="1" height="1" fill="#000"/>
<rect x="86" y="216" width="1" height="1" fill="#000"/>
<rect x="93" y="216" width="1" height="1" fill="#000"/>
<rect x="96" y="216" width="1" height="1" fill="#000"/>
<rect x="101" y="216" width="1" height="1" fill="#000"/>
<rect x="86" y="217" width="1" height="1" fill="#000"/>
<rect x="93" y="217" width="1" height="1" fill="#000"/>
<rect x="96" y="217" width="6" height="1" fill="#000"/>
<rect x="93" y="218" width="1" height="1" fill="#000"/>
<rect x="96" y="218" width="1" height="1" fill="#000"/>
<rect x="101" y="218" width="1" height="1" fill="#000"/>
<rect x="92" y="219" width="1" height="1" fill="#000"/>
<rect x="96" y="219" width="1" height="1" fill="#000"/>
<rect x="101" y="219" width="1" height="1" fill="#000"/>
<rect x="92" y="220" width="1" height="1" fill="#000"/>
<rect x="96" y="220" width="1" height="1" fill="#000"/>
<rect x="101" y="220" width="1" height="1" fill="#000"/>
<rect x="96" y="221" width="6" height="1" fill="#000"/>
<defs><pattern id="ydither" width="2" height="2" patternUnits="userSpaceOnUse"><rect width="2" height="2" fill="#ffff00"/><rect width="1" height="1" fill="#c8c8a0"/><rect x="1" y="1" width="1" height="1" fill="#ffff00"/></pattern></defs>
<rect x="112" y="210" width="14" height="13" fill="#000"/>
<rect x="113" y="212" width="12" height="10" fill="url(#ydither)"/>
<rect x="119" y="211" width="6" height="1" fill="url(#ydither)"/>
<rect x="113" y="209" width="6" height="1" fill="#000"/>
<rect x="113" y="210" width="6" height="1" fill="url(#ydither)"/>
<rect x="113" y="211" width="6" height="1" fill="#000"/>
<path d="M114 214.5 L116.5 217 L120.5 213 M117 218.5 L119.5 221 L123.5 217" stroke="#000" stroke-width="1.6" fill="none"/>
<rect x="135" y="207" width="1" height="20" fill="#808080"/>
<rect x="136" y="207" width="1" height="20" fill="#ffffff"/>
<rect x="152" y="208" width="1" height="1" fill="#000"/>
<rect x="146" y="209" width="1" height="1" fill="#f00"/>
<rect x="151" y="209" width="1" height="1" fill="#8a8a8a"/>
<rect x="152" y="209" width="1" height="1" fill="#000"/>
<rect x="153" y="209" width="1" height="1" fill="#8a8a8a"/>
<rect x="145" y="210" width="1" height="1" fill="#f00"/>
<rect x="147" y="210" width="1" height="1" fill="#f00"/>
<rect x="152" y="210" width="1" height="1" fill="#000"/>
<rect x="144" y="211" width="1" height="1" fill="#f00"/>
<rect x="148" y="211" width="1" height="1" fill="#f00"/>
<rect x="151" y="211" width="1" height="1" fill="#8a8a8a"/>
<rect x="152" y="211" width="1" height="1" fill="#000"/>
<rect x="153" y="211" width="1" height="1" fill="#8a8a8a"/>
<rect x="148" y="212" width="1" height="1" fill="#f00"/>
<rect x="152" y="212" width="1" height="1" fill="#000"/>
<rect x="149" y="213" width="1" height="1" fill="#f00"/>
<rect x="151" y="213" width="1" height="1" fill="#8a8a8a"/>
<rect x="152" y="213" width="1" height="1" fill="#000"/>
<rect x="153" y="213" width="1" height="1" fill="#8a8a8a"/>
<rect x="145" y="214" width="1" height="1" fill="#8a8a8a"/>
<rect x="147" y="214" width="1" height="1" fill="#8a8a8a"/>
<rect x="149" y="214" width="1" height="1" fill="#f00"/>
<rect x="151" y="214" width="1" height="1" fill="#8a8a8a"/>
<rect x="152" y="214" width="1" height="1" fill="#000"/>
<rect x="153" y="214" width="1" height="1" fill="#8a8a8a"/>
<rect x="155" y="214" width="1" height="1" fill="#8a8a8a"/>
<rect x="157" y="214" width="1" height="1" fill="#8a8a8a"/>
<rect x="144" y="215" width="6" height="1" fill="#000"/>
<rect x="150" y="215" width="1" height="1" fill="#f00"/>
<rect x="151" y="215" width="9" height="1" fill="#000"/>
<rect x="145" y="216" width="1" height="1" fill="#8a8a8a"/>
<rect x="147" y="216" width="1" height="1" fill="#8a8a8a"/>
<rect x="149" y="216" width="1" height="1" fill="#8a8a8a"/>
<rect x="151" y="216" width="1" height="1" fill="#f00"/>
<rect x="152" y="216" width="1" height="1" fill="#000"/>
<rect x="153" y="216" width="1" height="1" fill="#8a8a8a"/>
<rect x="155" y="216" width="1" height="1" fill="#8a8a8a"/>
<rect x="157" y="216" width="1" height="1" fill="#8a8a8a"/>
<rect x="159" y="216" width="1" height="1" fill="#f00"/>
<rect x="151" y="217" width="1" height="1" fill="#f00"/>
<rect x="152" y="217" width="1" height="1" fill="#000"/>
<rect x="158" y="217" width="1" height="1" fill="#f00"/>
<rect x="151" y="218" width="1" height="1" fill="#8a8a8a"/>
<rect x="152" y="218" width="1" height="1" fill="#000"/>
<rect x="153" y="218" width="1" height="1" fill="#f00"/>
<rect x="157" y="218" width="1" height="1" fill="#f00"/>
<rect x="152" y="219" width="1" height="1" fill="#000"/>
<rect x="154" y="219" width="1" height="1" fill="#f00"/>
<rect x="156" y="219" width="1" height="1" fill="#f00"/>
<rect x="151" y="220" width="1" height="1" fill="#8a8a8a"/>
<rect x="152" y="220" width="1" height="1" fill="#000"/>
<rect x="153" y="220" width="1" height="1" fill="#8a8a8a"/>
<rect x="155" y="220" width="1" height="1" fill="#f00"/>
<rect x="152" y="221" width="1" height="1" fill="#000"/>
<rect x="151" y="222" width="1" height="1" fill="#8a8a8a"/>
<rect x="152" y="222" width="1" height="1" fill="#000"/>
<rect x="153" y="222" width="1" height="1" fill="#8a8a8a"/>
<rect x="152" y="223" width="1" height="1" fill="#000"/>
<rect x="176" y="208" width="2" height="1" fill="#000"/>
<rect x="174" y="209" width="1" height="1" fill="#000"/>
<rect x="176" y="209" width="2" height="1" fill="#000"/>
<rect x="179" y="209" width="1" height="1" fill="#000"/>
<rect x="175" y="210" width="1" height="1" fill="#000"/>
<rect x="178" y="210" width="1" height="1" fill="#000"/>
<rect x="176" y="211" width="2" height="1" fill="#000"/>
<rect x="172" y="215" width="10" height="1" fill="#000"/>
<rect x="172" y="216" width="1" height="1" fill="#000"/>
<rect x="174" y="216" width="1" height="1" fill="#000"/>
<rect x="177" y="216" width="1" height="1" fill="#000"/>
<rect x="180" y="216" width="1" height="1" fill="#000"/>
<rect x="182" y="216" width="1" height="1" fill="#000"/>
<rect x="171" y="217" width="1" height="1" fill="#000"/>
<rect x="183" y="217" width="1" height="1" fill="#000"/>
<rect x="170" y="218" width="1" height="1" fill="#000"/>
<rect x="184" y="218" width="1" height="1" fill="#000"/>
<rect x="169" y="219" width="1" height="1" fill="#000"/>
<rect x="184" y="219" width="1" height="1" fill="#000"/>
<rect x="176" y="221" width="2" height="1" fill="#000"/>
<rect x="175" y="222" width="1" height="1" fill="#000"/>
<rect x="178" y="222" width="1" height="1" fill="#000"/>
<rect x="174" y="223" width="1" height="1" fill="#000"/>
<rect x="176" y="223" width="2" height="1" fill="#000"/>
<rect x="179" y="223" width="1" height="1" fill="#000"/>
<rect x="176" y="224" width="2" height="1" fill="#000"/>
<rect x="190" y="206" width="86" height="20" fill="#ffffff"/>
<rect x="190" y="206" width="85" height="19" fill="#808080"/>
<rect x="191" y="207" width="84" height="18" fill="#d4d0c8"/>
<rect x="191" y="207" width="83" height="17" fill="#404040"/>
<rect x="192" y="208" width="82" height="16" fill="#ffffff"/>
<rect x="258" y="208" width="16" height="16" fill="#404040"/>
<rect x="258" y="208" width="15" height="15" fill="#d4d0c8"/>
<rect x="259" y="209" width="14" height="14" fill="#808080"/>
<rect x="259" y="209" width="13" height="13" fill="#ffffff"/>
<rect x="260" y="210" width="12" height="12" fill="#d4d0c8"/>
<rect x="262" y="213" width="7" height="1" fill="#000"/>
<rect x="263" y="214" width="5" height="1" fill="#000"/>
<rect x="264" y="215" width="3" height="1" fill="#000"/>
<rect x="265" y="216" width="1" height="1" fill="#000"/>
<text x="194" y="221" font-size="11" fill="#000" font-weight="normal" text-anchor="start" font-family="Liberation Sans">Rectangular</text>
<rect x="276" y="206" width="66" height="20" fill="#ffffff"/>
<rect x="276" y="206" width="65" height="19" fill="#808080"/>
<rect x="277" y="207" width="64" height="18" fill="#d4d0c8"/>
<rect x="277" y="207" width="63" height="17" fill="#404040"/>
<rect x="278" y="208" width="62" height="16" fill="#ffffff"/>
<rect x="324" y="208" width="16" height="16" fill="#404040"/>
<rect x="324" y="208" width="15" height="15" fill="#d4d0c8"/>
<rect x="325" y="209" width="14" height="14" fill="#808080"/>
<rect x="325" y="209" width="13" height="13" fill="#ffffff"/>
<rect x="326" y="210" width="12" height="12" fill="#d4d0c8"/>
<rect x="328" y="213" width="7" height="1" fill="#000"/>
<rect x="329" y="214" width="5" height="1" fill="#000"/>
<rect x="330" y="215" width="3" height="1" fill="#000"/>
<rect x="331" y="216" width="1" height="1" fill="#000"/>
<rect x="279" y="209" width="45" height="15" fill="#0a246a"/>
<text x="281" y="221" font-size="11" fill="#ffffff" font-weight="normal" text-anchor="start" font-family="Liberation Sans">CH BAL</text>
<rect x="279.5" y="209.5" width="44" height="14" fill="none" stroke="#000" stroke-width="1" shape-rendering="crispEdges"/>
<rect x="279.5" y="209.5" width="44" height="14" fill="none" stroke="#ffe060" stroke-width="1" stroke-dasharray="1 1" shape-rendering="crispEdges"/>
<rect x="342" y="206" width="60" height="20" fill="#ffffff"/>
<rect x="342" y="206" width="59" height="19" fill="#808080"/>
<rect x="343" y="207" width="58" height="18" fill="#d4d0c8"/>
<rect x="343" y="207" width="57" height="17" fill="#404040"/>
<rect x="344" y="208" width="56" height="16" fill="#ffffff"/>
<rect x="384" y="208" width="16" height="16" fill="#404040"/>
<rect x="384" y="208" width="15" height="15" fill="#d4d0c8"/>
<rect x="385" y="209" width="14" height="14" fill="#808080"/>
<rect x="385" y="209" width="13" height="13" fill="#ffffff"/>
<rect x="386" y="210" width="12" height="12" fill="#d4d0c8"/>
<rect x="388" y="213" width="7" height="1" fill="#000"/>
<rect x="389" y="214" width="5" height="1" fill="#000"/>
<rect x="390" y="215" width="3" height="1" fill="#000"/>
<rect x="391" y="216" width="1" height="1" fill="#000"/>
<text x="346" y="221" font-size="11" fill="#000" font-weight="normal" text-anchor="start" font-family="Liberation Sans">dBV</text>
<rect x="402" y="206" width="86" height="20" fill="#ffffff"/>
<rect x="402" y="206" width="85" height="19" fill="#808080"/>
<rect x="403" y="207" width="84" height="18" fill="#d4d0c8"/>
<rect x="403" y="207" width="83" height="17" fill="#404040"/>
<rect x="404" y="208" width="82" height="16" fill="#ffffff"/>
<rect x="470" y="208" width="16" height="16" fill="#404040"/>
<rect x="470" y="208" width="15" height="15" fill="#d4d0c8"/>
<rect x="471" y="209" width="14" height="14" fill="#808080"/>
<rect x="471" y="209" width="13" height="13" fill="#ffffff"/>
<rect x="472" y="210" width="12" height="12" fill="#d4d0c8"/>
<rect x="474" y="213" width="7" height="1" fill="#000"/>
<rect x="475" y="214" width="5" height="1" fill="#000"/>
<rect x="476" y="215" width="3" height="1" fill="#000"/>
<rect x="477" y="216" width="1" height="1" fill="#000"/>
<text x="406" y="221" font-size="11" fill="#000" font-weight="normal" text-anchor="start" font-family="Liberation Sans">Unsmoothed</text>
<rect x="488" y="206" width="48" height="20" fill="#ffffff"/>
<rect x="488" y="206" width="47" height="19" fill="#808080"/>
<rect x="489" y="207" width="46" height="18" fill="#d4d0c8"/>
<rect x="489" y="207" width="45" height="17" fill="#404040"/>
<rect x="490" y="208" width="44" height="16" fill="#ffffff"/>
<rect x="518" y="208" width="16" height="16" fill="#404040"/>
<rect x="518" y="208" width="15" height="15" fill="#d4d0c8"/>
<rect x="519" y="209" width="14" height="14" fill="#808080"/>
<rect x="519" y="209" width="13" height="13" fill="#ffffff"/>
<rect x="520" y="210" width="12" height="12" fill="#d4d0c8"/>
<rect x="522" y="213" width="7" height="1" fill="#000"/>
<rect x="523" y="214" width="5" height="1" fill="#000"/>
<rect x="524" y="215" width="3" height="1" fill="#000"/>
<rect x="525" y="216" width="1" height="1" fill="#000"/>
<text x="492" y="221" font-size="11" fill="#000" font-weight="normal" text-anchor="start" font-family="Liberation Sans"></text>
<rect x="491" y="209" width="6" height="13" fill="#0a246a"/>
<rect x="494" y="212" width="1" height="8" fill="#ffffff"/>
<rect x="492" y="212" width="2" height="1" fill="#ffffff"/>
<rect x="536" y="205" width="40" height="24" fill="#ffffff"/>
<rect x="536" y="205" width="39" height="23" fill="#808080"/>
<rect x="537" y="206" width="38" height="22" fill="#d4d0c8"/>
<rect x="554.8" y="209" width="2.5" height="12.5" fill="#000"/>
<path d="M555 209 L557.3 209 L555 212.8 L552 214.2 L552 212 Z" fill="#000"/>
<rect x="5" y="235" width="639" height="348" fill="#ffffff"/>
<rect x="5" y="235" width="638" height="347" fill="#808080"/>
<rect x="6" y="236" width="636" height="345" fill="#000"/>
<rect x="66" y="247" width="2" height="1" fill="#ffffff"/>
<rect x="65" y="248" width="4" height="1" fill="#ffffff"/>
<rect x="64" y="249" width="6" height="1" fill="#ffffff"/>
<rect x="63" y="250" width="8" height="1" fill="#ffffff"/>
<rect x="62" y="251" width="10" height="1" fill="#ffffff"/>
<rect x="86" y="247" width="10" height="1" fill="#ffffff"/>
<rect x="87" y="248" width="8" height="1" fill="#ffffff"/>
<rect x="88" y="249" width="6" height="1" fill="#ffffff"/>
<rect x="89" y="250" width="4" height="1" fill="#ffffff"/>
<rect x="90" y="251" width="2" height="1" fill="#ffffff"/>
<rect x="114" y="244" width="2" height="1" fill="#ffffff"/>
<rect x="113" y="245" width="4" height="1" fill="#ffffff"/>
<rect x="112" y="246" width="6" height="1" fill="#ffffff"/>
<rect x="111" y="247" width="8" height="1" fill="#ffffff"/>
<rect x="110" y="248" width="10" height="1" fill="#ffffff"/>
<rect x="110" y="251" width="10" height="1" fill="#ffffff"/>
<rect x="111" y="252" width="8" height="1" fill="#ffffff"/>
<rect x="112" y="253" width="6" height="1" fill="#ffffff"/>
<rect x="113" y="254" width="4" height="1" fill="#ffffff"/>
<rect x="114" y="255" width="2" height="1" fill="#ffffff"/>
<rect x="134" y="244" width="10" height="1" fill="#ffffff"/>
<rect x="135" y="245" width="8" height="1" fill="#ffffff"/>
<rect x="136" y="246" width="6" height="1" fill="#ffffff"/>
<rect x="137" y="247" width="4" height="1" fill="#ffffff"/>
<rect x="138" y="248" width="2" height="1" fill="#ffffff"/>
<rect x="138" y="251" width="2" height="1" fill="#ffffff"/>
<rect x="137" y="252" width="4" height="1" fill="#ffffff"/>
<rect x="136" y="253" width="6" height="1" fill="#ffffff"/>
<rect x="135" y="254" width="8" height="1" fill="#ffffff"/>
<rect x="134" y="255" width="10" height="1" fill="#ffffff"/>
<path d="M189 251.5 L194.5 257" stroke="#fff" stroke-width="2.2" stroke-dasharray="1.2 0.9"/>
<rect x="188" y="251" width="2" height="2" fill="#ffff00"/>
<path d="M182.5 242.5 L187.5 242.5 L190.5 245.5 L190.5 250.5 L187.5 253.5 L182.5 253.5 L179.5 250.5 L179.5 245.5 Z" fill="#000" stroke="#fff" stroke-width="1"/>
<path d="M183.5 243.5 L186.5 243.5 L189.5 246.5 L189.5 249.5 L186.5 252.5 L183.5 252.5 L180.5 249.5 L180.5 246.5 Z" fill="none" stroke="#606060" stroke-width="1"/>
<rect x="182" y="247" width="6" height="2" fill="#f00"/>
<rect x="184" y="245" width="2" height="6" fill="#f00"/>
<path d="M212.5 251.5 L219.5 258.5" stroke="#c0c0c0" stroke-width="1"/>
<path d="M206.5 243.5 L211 243.5 L213.5 246 L213.5 250.5 L211 253 L206.5 253 L204 250.5 L204 246 Z" fill="none" stroke="#e8e8e8" stroke-width="1.6"/>
<rect x="247" y="243" width="16" height="16" fill="#ffffc0"/>
<rect x="247" y="244" width="13" height="13" fill="#ffffff"/>
<rect x="247" y="244" width="12" height="12" fill="#808080"/>
<rect x="248" y="245" width="11" height="11" fill="#d4d0c8"/>
<rect x="248" y="245" width="10" height="10" fill="#404040"/>
<rect x="249" y="246" width="9" height="9" fill="#ffffff"/>
<path d="M250 249.5 L252.5 252.5 L257 247" stroke="#000" stroke-width="2" fill="none"/>
<rect x="284" y="243" width="14" height="14" fill="#ffffff"/>
<rect x="285" y="244" width="12" height="12" fill="#000"/>
<text x="291" y="255" font-size="13.5" fill="#ffffff" font-weight="bold" text-anchor="middle" font-family="Liberation Sans">1</text>
<rect x="305" y="243" width="16" height="16" fill="#ff0000"/>
<rect x="305" y="244" width="14" height="13" fill="#ffffff"/>
<rect x="305" y="244" width="13" height="12" fill="#808080"/>
<rect x="306" y="245" width="12" height="11" fill="#d4d0c8"/>
<rect x="306" y="245" width="11" height="10" fill="#404040"/>
<rect x="307" y="246" width="10" height="9" fill="#ffffff"/>
<rect x="330" y="243" width="14" height="14" fill="#ffffff"/>
<rect x="331" y="244" width="12" height="12" fill="#000"/>
<text x="337" y="255" font-size="13.5" fill="#ffffff" font-weight="bold" text-anchor="middle" font-family="Liberation Sans">2</text>
<rect x="351" y="243" width="16" height="16" fill="#ffffff"/>
<rect x="351" y="244" width="14" height="13" fill="#ffffff"/>
<rect x="351" y="244" width="13" height="12" fill="#808080"/>
<rect x="352" y="245" width="12" height="11" fill="#d4d0c8"/>
<rect x="352" y="245" width="11" height="10" fill="#404040"/>
<rect x="353" y="246" width="10" height="9" fill="#ffffff"/>
<rect x="376" y="243" width="14" height="14" fill="#ffffff"/>
<rect x="377" y="244" width="12" height="12" fill="#000"/>
<text x="383" y="255" font-size="13.5" fill="#ffffff" font-weight="bold" text-anchor="middle" font-family="Liberation Sans">3</text>
<rect x="397" y="243" width="16" height="16" fill="#00ff00"/>
<rect x="397" y="244" width="14" height="13" fill="#ffffff"/>
<rect x="397" y="244" width="13" height="12" fill="#808080"/>
<rect x="398" y="245" width="12" height="11" fill="#d4d0c8"/>
<rect x="398" y="245" width="11" height="10" fill="#404040"/>
<rect x="399" y="246" width="10" height="9" fill="#ffffff"/>
<rect x="422" y="243" width="14" height="14" fill="#ffffff"/>
<rect x="423" y="244" width="12" height="12" fill="#000"/>
<text x="429" y="255" font-size="13.5" fill="#ffffff" font-weight="bold" text-anchor="middle" font-family="Liberation Sans">4</text>
<rect x="443" y="243" width="16" height="16" fill="#ffff00"/>
<rect x="443" y="244" width="14" height="13" fill="#ffffff"/>
<rect x="443" y="244" width="13" height="12" fill="#808080"/>
<rect x="444" y="245" width="12" height="11" fill="#d4d0c8"/>
<rect x="444" y="245" width="11" height="10" fill="#404040"/>
<rect x="445" y="246" width="10" height="9" fill="#ffffff"/>
<rect x="468" y="243" width="14" height="14" fill="#ffffff"/>
<rect x="469" y="244" width="12" height="12" fill="#000"/>
<text x="475" y="255" font-size="13.5" fill="#ffffff" font-weight="bold" text-anchor="middle" font-family="Liberation Sans">5</text>
<rect x="489" y="243" width="16" height="16" fill="#ff8000"/>
<rect x="489" y="244" width="14" height="13" fill="#ffffff"/>
<rect x="489" y="244" width="13" height="12" fill="#808080"/>
<rect x="490" y="245" width="12" height="11" fill="#d4d0c8"/>
<rect x="490" y="245" width="11" height="10" fill="#404040"/>
<rect x="491" y="246" width="10" height="9" fill="#ffffff"/>
<rect x="509" y="239" width="24" height="22" fill="#808080"/>
<rect x="509" y="239" width="23" height="21" fill="#e0e0e0"/>
<rect x="510" y="240" width="22" height="20" fill="#000"/>
<rect x="514" y="243" width="14" height="14" fill="#ffffff"/>
<rect x="515" y="244" width="12" height="12" fill="#000"/>
<text x="521" y="255" font-size="13.5" fill="#ffffff" font-weight="bold" text-anchor="middle" font-family="Liberation Sans">6</text>
<rect x="535" y="243" width="16" height="16" fill="#0000ff"/>
<rect x="535" y="244" width="14" height="13" fill="#ffffff"/>
<rect x="535" y="244" width="13" height="12" fill="#808080"/>
<rect x="536" y="245" width="12" height="11" fill="#d4d0c8"/>
<rect x="536" y="245" width="11" height="10" fill="#404040"/>
<rect x="537" y="246" width="10" height="9" fill="#ffffff"/>
<rect x="560" y="243" width="14" height="14" fill="#ffffff"/>
<rect x="561" y="244" width="12" height="12" fill="#000"/>
<text x="567" y="255" font-size="13.5" fill="#ffffff" font-weight="bold" text-anchor="middle" font-family="Liberation Sans">7</text>
<rect x="581" y="243" width="16" height="16" fill="#ff00ff"/>
<rect x="581" y="244" width="14" height="13" fill="#ffffff"/>
<rect x="581" y="244" width="13" height="12" fill="#808080"/>
<rect x="582" y="245" width="12" height="11" fill="#d4d0c8"/>
<rect x="582" y="245" width="11" height="10" fill="#404040"/>
<rect x="583" y="246" width="10" height="9" fill="#ffffff"/>
<rect x="606" y="243" width="14" height="14" fill="#ffffff"/>
<rect x="607" y="244" width="12" height="12" fill="#000"/>
<text x="613" y="255" font-size="13.5" fill="#ffffff" font-weight="bold" text-anchor="middle" font-family="Liberation Sans">8</text>
<rect x="627" y="243" width="16" height="16" fill="#80ffff"/>
<rect x="627" y="244" width="14" height="13" fill="#ffffff"/>
<rect x="627" y="244" width="13" height="12" fill="#808080"/>
<rect x="628" y="245" width="12" height="11" fill="#d4d0c8"/>
<rect x="628" y="245" width="11" height="10" fill="#404040"/>
<rect x="629" y="246" width="10" height="9" fill="#ffffff"/>
<path d="M55.5 265 V552 M106.5 265 V552 M135.5 265 V552 M156.5 265 V552 M173.5 265 V552 M186.5 265 V552 M197.5 265 V552 M207.5 265 V552 M216.5 265 V552 M223.5 265 V552 M274.5 265 V552 M304.5 265 V552 M325.5 265 V552 M341.5 265 V552 M354.5 265 V552 M366.5 265 V552 M376.5 265 V552 M384.5 265 V552 M392.5 265 V552 M443.5 265 V552 M472.5 265 V552 M493.5 265 V552 M510.5 265 V552 M523.5 265 V552 M534.5 265 V552 M544.5 265 V552 M553.5 265 V552 M560.5 265 V552 M611.5 265 V552 M55 265.5 H619 M55 294.5 H619 M55 322.5 H619 M55 351.5 H619 M55 379.5 H619 M55 408.5 H619 M55 437.5 H619 M55 465.5 H619 M55 494.5 H619 M55 522.5 H619 M55.5 265 V552 M618.5 265 V552 M56 271.5 H58 M616 271.5 H618 M56 276.5 H58 M616 276.5 H618 M56 282.5 H58 M616 282.5 H618 M56 288.5 H58 M616 288.5 H618 M56 299.5 H58 M616 299.5 H618 M56 305.5 H58 M616 305.5 H618 M56 311.5 H58 M616 311.5 H618 M56 316.5 H58 M616 316.5 H618 M56 328.5 H58 M616 328.5 H618 M56 334.5 H58 M616 334.5 H618 M56 339.5 H58 M616 339.5 H618 M56 345.5 H58 M616 345.5 H618 M56 357.5 H58 M616 357.5 H618 M56 362.5 H58 M616 362.5 H618 M56 368.5 H58 M616 368.5 H618 M56 374.5 H58 M616 374.5 H618 M56 385.5 H58 M616 385.5 H618 M56 391.5 H58 M616 391.5 H618 M56 397.5 H58 M616 397.5 H618 M56 402.5 H58 M616 402.5 H618 M56 414.5 H58 M616 414.5 H618 M56 419.5 H58 M616 419.5 H618 M56 425.5 H58 M616 425.5 H618 M56 431.5 H58 M616 431.5 H618 M56 442.5 H58 M616 442.5 H618 M56 448.5 H58 M616 448.5 H618 M56 454.5 H58 M616 454.5 H618 M56 459.5 H58 M616 459.5 H618 M56 471.5 H58 M616 471.5 H618 M56 477.5 H58 M616 477.5 H618 M56 482.5 H58 M616 482.5 H618 M56 488.5 H58 M616 488.5 H618 M56 500.5 H58 M616 500.5 H618 M56 505.5 H58 M616 505.5 H618 M56 511.5 H58 M616 511.5 H618 M56 517.5 H58 M616 517.5 H618 M56 528.5 H58 M616 528.5 H618 M56 534.5 H58 M616 534.5 H618 M56 540.5 H58 M616 540.5 H618 M56 545.5 H58 M616 545.5 H618" stroke="#808080" stroke-width="1" fill="none" shape-rendering="crispEdges"/>
<text x="51" y="270" font-size="12" fill="#ffffc0" font-weight="normal" text-anchor="end" font-family="Liberation Sans">40.0</text>
<text x="51" y="327" font-size="12" fill="#ffffc0" font-weight="normal" text-anchor="end" font-family="Liberation Sans">20.0</text>
<text x="51" y="384" font-size="12" fill="#ffffc0" font-weight="normal" text-anchor="end" font-family="Liberation Sans">0.0</text>
<text x="51" y="442" font-size="12" fill="#ffffc0" font-weight="normal" text-anchor="end" font-family="Liberation Sans">-20.0</text>
<text x="51" y="499" font-size="12" fill="#ffffc0" font-weight="normal" text-anchor="end" font-family="Liberation Sans">-40.0</text>
<text x="51" y="556" font-size="12" fill="#ffffc0" font-weight="normal" text-anchor="end" font-family="Liberation Sans">-60.0</text>
<text x="51" y="299" font-size="12" fill="#ffffc0" font-weight="normal" text-anchor="end" font-family="Liberation Sans">dBV</text>
<text x="55.5" y="571" font-size="12" fill="#ffffff" font-weight="normal" text-anchor="middle" font-family="Liberation Sans">10</text>
<text x="106.5" y="571" font-size="12" fill="#ffffff" font-weight="normal" text-anchor="middle" font-family="Liberation Sans">20</text>
<text x="173.5" y="571" font-size="12" fill="#ffffff" font-weight="normal" text-anchor="middle" font-family="Liberation Sans">50</text>
<text x="223.5" y="571" font-size="12" fill="#ffffff" font-weight="normal" text-anchor="middle" font-family="Liberation Sans">100</text>
<text x="274.5" y="571" font-size="12" fill="#ffffff" font-weight="normal" text-anchor="middle" font-family="Liberation Sans">200</text>
<text x="341.5" y="571" font-size="12" fill="#ffffff" font-weight="normal" text-anchor="middle" font-family="Liberation Sans">500</text>
<text x="392.5" y="571" font-size="12" fill="#ffffff" font-weight="normal" text-anchor="middle" font-family="Liberation Sans">1k</text>
<text x="443.5" y="571" font-size="12" fill="#ffffff" font-weight="normal" text-anchor="middle" font-family="Liberation Sans">2k</text>
<text x="510.5" y="571" font-size="12" fill="#ffffff" font-weight="normal" text-anchor="middle" font-family="Liberation Sans">5k</text>
<text x="560.5" y="571" font-size="12" fill="#ffffff" font-weight="normal" text-anchor="middle" font-family="Liberation Sans">10k</text>
<text x="611.5" y="571" font-size="12" fill="#ffffff" font-weight="normal" text-anchor="middle" font-family="Liberation Sans">20k</text>
<text x="463" y="571" font-size="12" fill="#ffffff" font-weight="normal" text-anchor="middle" font-family="Liberation Sans">Hz</text>
<path d="M388.5 551 V553 M389.5 548 V552 M390.5 546 V549 M390.5 546 V551 M391.5 550 V553 M393.5 551 V553 M394.5 304 V552 M394.5 304 V552 M395.5 551 V553 M397.5 545 V553 M397.5 545 V550 M398.5 549 V553 M443.5 529 V553 M444.5 486 V530 M445.5 463 V487 M445.5 463 V553 M473.5 519 V553 M474.5 417 V520 M474.5 417 V486 M475.5 485 V553 M493.5 545 V553 M494.5 529 V546 M495.5 521 V530 M495.5 521 V538 M496.5 537 V553 M511.5 517 V553 M512.5 481 V518 M512.5 481 V553 M524.5 547 V553 M525.5 542 V548 M525.5 542 V553 M552.5 550 V553 M553.5 546 V551 M554.5 540 V547 M555.5 537 V541 M555.5 537 V553 M567.5 545 V553 M568.5 531 V546 M569.5 523 V532 M569.5 523 V539 M570.5 538 V553 M580.5 550 V553 M581.5 545 V551 M582.5 542 V546 M582.5 542 V553 M55 552.5 H619" stroke="#ffffc0" stroke-width="1" fill="none" shape-rendering="crispEdges"/>
</svg></body></html>
